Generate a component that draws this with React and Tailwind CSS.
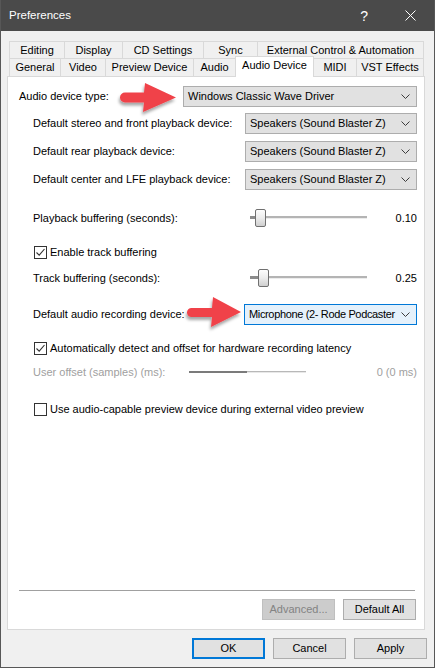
import React from "react";

const Chevron = () => (
  <svg width="9" height="5" viewBox="0 0 9 5" className="shrink-0 ml-[3px]">
    <path d="M0.5 0.5 L4.5 4.5 L8.5 0.5" fill="none" stroke="#3c3c3c" strokeWidth="1" />
  </svg>
);

const Dropdown = ({ text, w, active }) => (
  <div
    className={`flex items-center h-[21px] pl-[4px] pr-[6px] border ${
      active ? "border-[#0078d7] bg-[#e5f1fb]" : "border-[#adadad] bg-[#e1e1e1]"
    } ${w}`}
  >
    <span className={`flex-1 whitespace-nowrap ${active ? "tracking-[-0.35px]" : ""}`}>{text}</span>
    <Chevron />
  </div>
);

const Checkbox = ({ checked }) => (
  <div className="w-[13px] h-[13px] border border-[#333333] bg-white flex items-center justify-center shrink-0">
    {checked && (
      <svg width="11" height="11" viewBox="0 0 11 11">
        <path d="M1.5 5.5 L4.2 8.2 L9.5 2" fill="none" stroke="#333333" strokeWidth="1.1" />
      </svg>
    )}
  </div>
);

const Slider = ({ pos }) => (
  <div className="relative w-[117px] h-[20px] shrink-0">
    <div className="absolute left-0 top-[8px] h-[3px] bg-[#8c8c8c]" style={{ width: pos + 2 }} />
    <div className="absolute right-0 top-[8px] h-[2px] bg-[#b4b4b4]" style={{ left: pos + 2 }} />
    <div className="absolute right-0 top-[10px] h-[1px] bg-[#ececec]" style={{ left: pos + 2 }} />
    <div
      className="absolute top-[1px] w-[11px] h-[18px] rounded-[2px] border border-[#707070] bg-gradient-to-b from-[#fdfdfd] via-[#ececec] to-[#cfcfcf]"
      style={{ left: pos }}
    />
  </div>
);

const Btn = ({ children, disabled, primary }) => (
  <div
    className={`w-[73px] h-[21px] flex items-center justify-center ${
      disabled
        ? "bg-[#cccccc] border border-[#bfbfbf] text-[#838383]"
        : primary
        ? "bg-[#e1e1e1] border-2 border-[#0078d7]"
        : "bg-[#e1e1e1] border border-[#adadad]"
    }`}
  >
    {children}
  </div>
);

const Tab = ({ label, w, last }) => (
  <div
    className={`${w} h-full flex items-center justify-center border-t border-l border-[#d9d9d9] ${
      last ? "border-r" : ""
    }`}
  >
    {label}
  </div>
);

export default function App() {
  return (
    <div className="relative w-[435px] h-[668px] bg-[#f0f0f0] border-l border-r border-b border-[#575757] flex flex-col text-[11px] text-black font-['Liberation_Sans',Arial,sans-serif] leading-none overflow-hidden">
      {/* Title bar */}
      <div className="h-[31px] bg-[#4a4a4a] text-white flex items-center pl-[8px] shrink-0">
        <span className="text-[11.5px]">Preferences</span>
        <span className="ml-auto mr-[37px] text-[14px] text-white">?</span>
        <svg width="11" height="11" viewBox="0 0 11 11" className="mr-[18px]">
          <path d="M0.5 0.5 L10.5 10.5 M10.5 0.5 L0.5 10.5" stroke="#ffffff" strokeWidth="1" />
        </svg>
      </div>

      {/* Tabs */}
      <div className="mt-[10px] ml-[8px] w-[415px] flex flex-col shrink-0">
        <div className="flex h-[17px]">
          <Tab label="Editing" w="w-[55px]" />
          <Tab label="Display" w="w-[58px]" />
          <Tab label="CD Settings" w="w-[81px]" />
          <Tab label="Sync" w="w-[54px]" />
          <Tab label="External Control & Automation" w="w-[167px]" last />
        </div>
        <div className="flex h-[18px]">
          <Tab label="General" w="w-[51px]" />
          <Tab label="Video" w="w-[45px]" />
          <Tab label="Preview Device" w="w-[88px]" />
          <Tab label="Audio" w="w-[42px]" />
          <div className="relative z-10 w-[79px] h-[21px] -mt-[2px] flex items-center justify-center bg-white border-t border-l border-r border-[#d9d9d9] pb-[3px]">
            Audio Device
          </div>
          <div className="w-[42px] h-full flex items-center justify-center border-t border-[#d9d9d9]">MIDI</div>
          <Tab label="VST Effects" w="w-[68px]" last />
        </div>
      </div>

      {/* Panel */}
      <div className="ml-[6px] w-[418px] h-[554px] bg-white border border-[#d9d9d9] flex flex-col pl-[11px] pr-[7px] shrink-0">
        <div className="mt-[9px] flex items-center justify-between h-[21px]">
          <span>Audio device type:</span>
          <Dropdown text="Windows Classic Wave Driver" w="w-[234px]" />
        </div>
        <div className="mt-[6px] flex items-center justify-between h-[21px] pl-[14px]">
          <span>Default stereo and front playback device:</span>
          <Dropdown text="Speakers (Sound Blaster Z)" w="w-[172px]" />
        </div>
        <div className="mt-[7px] flex items-center justify-between h-[21px] pl-[14px]">
          <span>Default rear playback device:</span>
          <Dropdown text="Speakers (Sound Blaster Z)" w="w-[172px]" />
        </div>
        <div className="mt-[7px] flex items-center justify-between h-[21px] pl-[14px]">
          <span>Default center and LFE playback device:</span>
          <Dropdown text="Speakers (Sound Blaster Z)" w="w-[172px]" />
        </div>

        <div className="mt-[18px] flex items-center h-[20px] pl-[14px]">
          <span className="flex-1">Playback buffering (seconds):</span>
          <Slider pos={5} />
          <span className="w-[50px] text-right">0.10</span>
        </div>

        <div className="mt-[18px] flex items-center h-[13px] pl-[15px] gap-[3px]">
          <Checkbox checked />
          <span>Enable track buffering</span>
        </div>

        <div className="mt-[9px] flex items-center h-[20px] pl-[14px]">
          <span className="flex-1">Track buffering (seconds):</span>
          <Slider pos={8} />
          <span className="w-[50px] text-right">0.25</span>
        </div>

        <div className="mt-[16px] flex items-center justify-between h-[21px] pl-[14px]">
          <span>Default audio recording device:</span>
          <Dropdown text="Microphone (2- Rode Podcaster" w="w-[173px]" active />
        </div>

        <div className="mt-[17px] flex items-center h-[13px] pl-[15px] gap-[3px]">
          <Checkbox checked />
          <span>Automatically detect and offset for hardware recording latency</span>
        </div>

        <div className="mt-[10px] flex items-center h-[14px] pl-[14px] text-[#a0a0a0]">
          <span className="w-[156px]">User offset (samples) (ms):</span>
          <div className="flex w-[117px] items-start">
            <div className="w-[58px] h-[2px] bg-[#7b7b7b]" />
            <div className="flex-1 h-[2px] bg-[#e8e8e8] border-t border-[#b8b8b8]" />
          </div>
          <span className="flex-1 text-right">0 (0 ms)</span>
        </div>

        <div className="mt-[24px] flex items-center h-[13px] pl-[15px] gap-[3px]">
          <Checkbox />
          <span>Use audio-capable preview device during external video preview</span>
        </div>

        <div className="flex-1" />
        <div className="h-[1px] bg-[#a0a0a0] mr-[2px]" />
        <div className="mt-[8px] mb-[9px] flex justify-end gap-[8px] pr-[1px]">
          <Btn disabled>Advanced...</Btn>
          <Btn>Default All</Btn>
        </div>
      </div>

      {/* Bottom buttons */}
      <div className="mt-[8px] flex justify-end gap-[8px] pr-[7px]">
        <Btn primary>OK</Btn>
        <Btn>Cancel</Btn>
        <Btn>Apply</Btn>
      </div>

      {/* Annotation arrows */}
      <svg
        className="absolute left-[-1px] top-0 pointer-events-none"
        width="435"
        height="668"
        viewBox="0 0 435 668"
      >
        <defs>
          <filter id="sh" x="-20%" y="-40%" width="140%" height="180%">
            <feDropShadow dx="-1" dy="3" stdDeviation="1.6" floodColor="#000000" floodOpacity="0.35" />
          </filter>
        </defs>
        <path
          d="M125 92.5 L144 92.5 L145 83 L176 97.5 L143 112 L144 102.5 L125 102.5 A5 5 0 0 1 125 92.5 Z"
          fill="#f0424a"
          filter="url(#sh)"
        />
        <path
          d="M191.5 308 L212 308 L213 297 L241 312 L211 327 L212 317 L191.5 317 A4.5 4.5 0 0 1 191.5 308 Z"
          fill="#f0424a"
          filter="url(#sh)"
        />
      </svg>
    </div>
  );
}
